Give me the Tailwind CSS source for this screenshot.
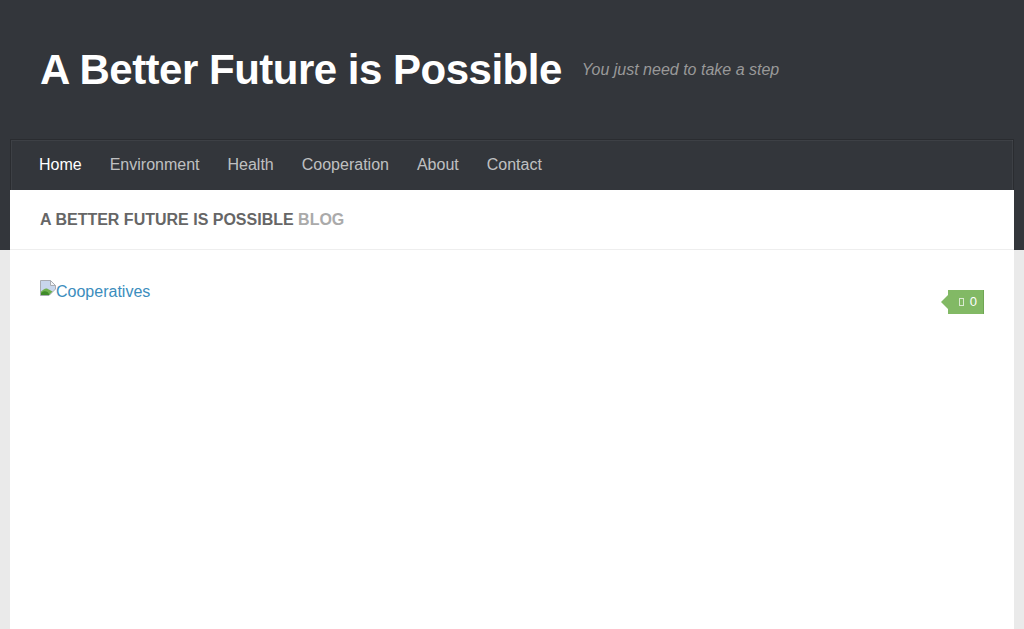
<!DOCTYPE html>
<html lang="en">
<head>
<meta charset="utf-8">
<title>A Better Future is Possible</title>
<script src="https://cdn.jsdelivr.net/npm/@tailwindcss/browser@4"></script>
</head>
<body class="h-[629px] overflow-hidden bg-[#eaeaea] font-['Liberation_Sans',Arial,sans-serif]">
<header class="bg-[#33363b] h-[250px] px-[10px]">
  <div class="h-[139px] flex items-center px-[30px]">
    <a href="#" class="text-[42px] leading-[50px] font-bold tracking-[-0.5px] text-white">A Better Future is Possible</a>
    <p class="ml-5 text-base italic text-[#999999]">You just need to take a step</p>
  </div>
  <nav class="h-[51px] border-x border-t border-[#2a2c30] shadow-[inset_1px_1px_0_rgba(255,255,255,0.05),inset_-1px_0_0_rgba(255,255,255,0.05)] flex items-start pl-[14px] text-base text-white/70">
    <a href="#" class="px-[14px] pt-[15px] leading-[20px] text-white">Home</a>
    <a href="#" class="px-[14px] pt-[15px] leading-[20px]">Environment</a>
    <a href="#" class="px-[14px] pt-[15px] leading-[20px]">Health</a>
    <a href="#" class="px-[14px] pt-[15px] leading-[20px]">Cooperation</a>
    <a href="#" class="px-[14px] pt-[15px] leading-[20px]">About</a>
    <a href="#" class="px-[14px] pt-[15px] leading-[20px]">Contact</a>
  </nav>
</header>
<main class="relative mx-[10px] -mt-[60px] h-[439px] bg-white">
  <div class="h-[60px] border-b border-[#eeeeee] px-[30px] flex items-center text-base font-bold uppercase text-[#666666]">
    <h2>A Better Future is Possible <span class="text-[#aaaaaa]">Blog</span></h2>
  </div>
  <div class="flex items-start justify-between px-[30px] pt-[30px]">
    <a href="#" class="flex items-start text-base leading-[20px] text-[#3b8dbd]">
      <svg class="block w-4 h-4 shrink-0" viewBox="0 0 16 16" aria-hidden="true">
        <path d="M0.5 15.5V0.5H10.5L15.5 5.5V9L9 15.5Z" fill="#c8d6ec" stroke="#a9acb2"/>
        <path d="M10.5 0.5V5.5H15.5Z" fill="#f2f4f7" stroke="#a9acb2"/>
        <path d="M1 15V11.5C3 9.5 5 8 7 8.5L12.5 11.5L9 15Z" fill="#6fb04e"/>
        <path d="M1 15V13C3 11 5.5 10.5 7.5 12L9.5 14.5L9 15Z" fill="#3f8a2a"/>
      </svg>
      <span class="pt-[2px]">Cooperatives</span>
    </a>
    <a href="#" class="relative mt-[10px] flex items-center justify-end w-[36px] h-[24px] pr-[6px] bg-[#82b965] border-r border-[#6fa653] text-[13px] text-white">
      <span class="absolute -left-[7px] top-[5px] w-0 h-0 border-y-[7px] border-r-[7px] border-y-transparent border-r-[#82b965]"></span>
      <span class="block w-[5px] h-[8px] border border-white/70 mr-[6px]"></span>
      <span>0</span>
    </a>
  </div>
</main>
</body>
</html>
